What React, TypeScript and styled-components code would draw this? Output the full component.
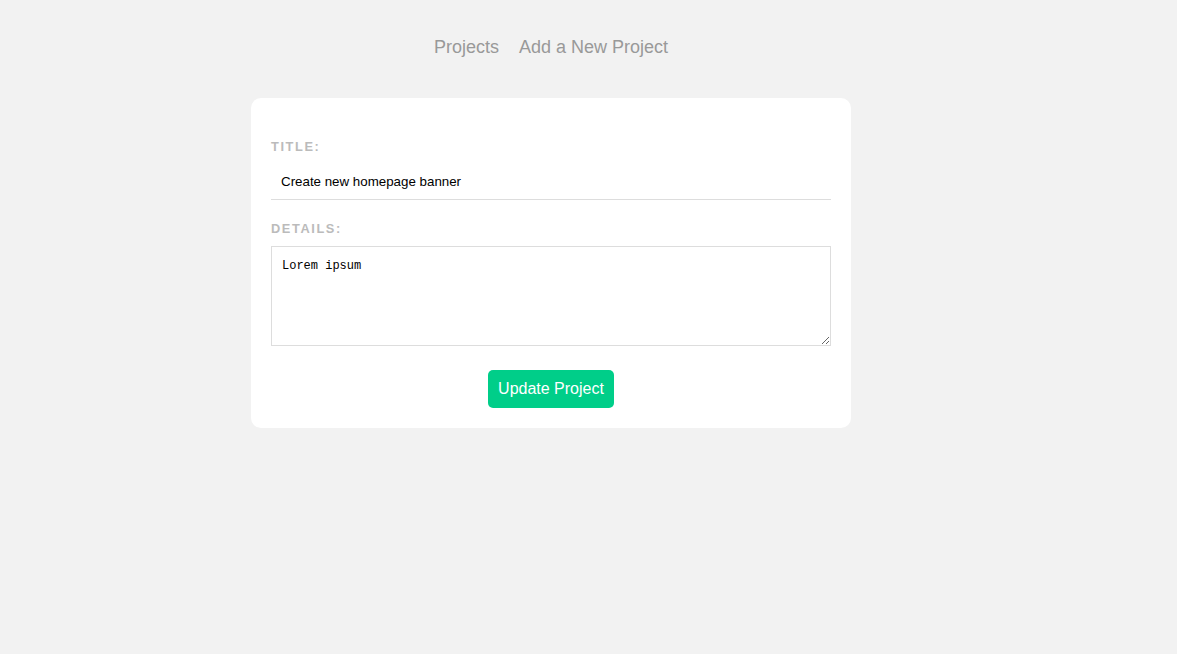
import React from "react";
import styled, { createGlobalStyle } from "styled-components";

const Global = createGlobalStyle`
  body {
    margin: 0;
    background: #f2f2f2;
    font-family: "Liberation Sans", Arial, sans-serif;
  }
`;

const Page = styled.div`
  width: 1102px;
`;

const Nav = styled.nav`
  display: flex;
  justify-content: center;
  gap: 20px;
  padding-top: 37px;
`;

const NavLink = styled.a`
  font-size: 18px;
  line-height: 21px;
  color: #999;
  text-decoration: none;
  cursor: pointer;
`;

const Form = styled.form`
  width: 600px;
  box-sizing: border-box;
  margin: 40px auto 0;
  background: #fff;
  padding: 20px;
  border-radius: 10px;
`;

const Label = styled.label`
  display: block;
  margin-top: 21px;
  font-size: 12.8px;
  line-height: 15px;
  font-weight: bold;
  color: #bbb;
  text-transform: uppercase;
  letter-spacing: 1.6px;
`;

const Input = styled.input`
  display: block;
  width: 100%;
  box-sizing: border-box;
  margin-top: 9px;
  padding: 11px 10px 9px;
  border: 0;
  border-bottom: 1px solid #ddd;
  font-family: "Liberation Sans", Arial, sans-serif;
  font-size: 13.333px;
  line-height: 16px;
  color: #000;
  outline: none;
`;

const TextArea = styled.textarea`
  display: block;
  width: 100%;
  box-sizing: border-box;
  margin-top: 10px;
  height: 100px;
  padding: 11px 10px 9px;
  border: 1px solid #ddd;
  font-family: "Liberation Mono", monospace;
  font-size: 12px;
  line-height: 16px;
  color: #000;
  outline: none;
`;

const Button = styled.button`
  display: block;
  margin: 24px auto 0;
  background: #00ce89;
  color: #fff;
  border: 0;
  border-radius: 5px;
  height: 38px;
  padding: 0 10px;
  font-family: "Liberation Sans", Arial, sans-serif;
  font-size: 16px;
  cursor: pointer;
`;

export default function App() {
  return (
    <Page>
      <Global />
      <Nav>
        <NavLink>Projects</NavLink>
        <NavLink>Add a New Project</NavLink>
      </Nav>
      <Form onSubmit={(e) => e.preventDefault()}>
        <Label>Title:</Label>
        <Input defaultValue="Create new homepage banner" />
        <Label>Details:</Label>
        <TextArea defaultValue="Lorem ipsum" />
        <Button>Update Project</Button>
      </Form>
    </Page>
  );
}
